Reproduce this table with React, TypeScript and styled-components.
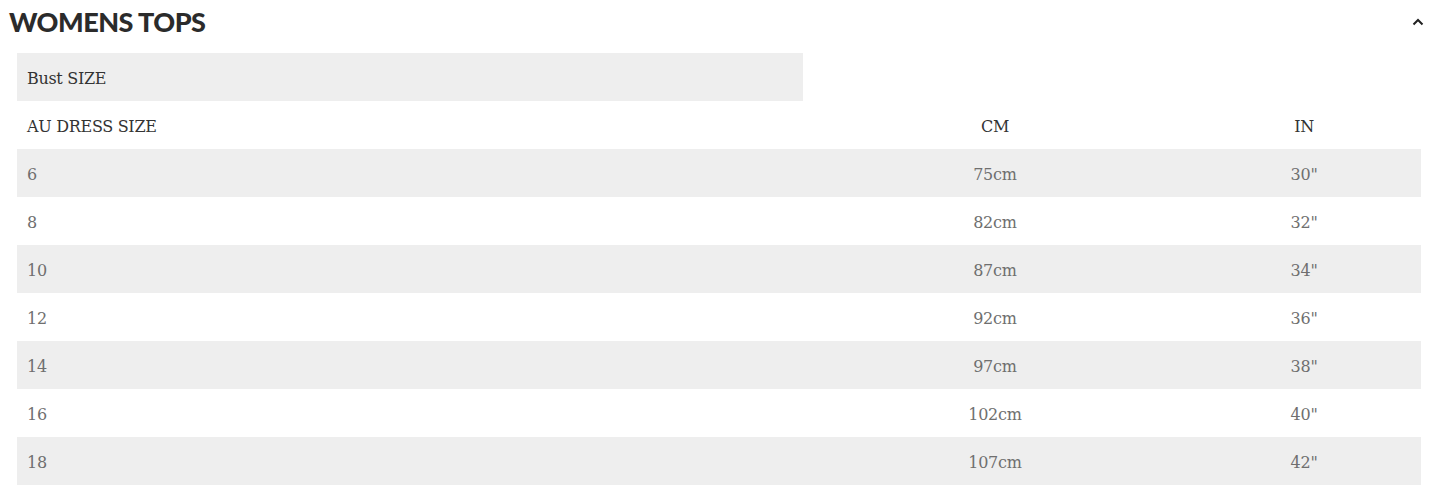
import styled, { createGlobalStyle } from "styled-components";

const GlobalStyle = createGlobalStyle`
  body {
    margin: 0;
    background: #ffffff;
  }
`;

const Page = styled.div`
  display: flex;
  flex-direction: column;
  padding: 0 0 0 9px;
  width: 1436px;
`;

const Header = styled.div`
  display: flex;
  justify-content: space-between;
  align-items: center;
  height: 44px;
  padding-right: 20px;
`;

const Title = styled.h2`
  margin: 0;
  font-family: Lato, "Noto Sans", sans-serif;
  font-weight: 900;
  font-size: 27px;
  letter-spacing: -0.5px;
  color: #2b2b2b;
  line-height: 44px;
`;

const Toggle = styled.span`
  display: flex;
  align-items: center;
  width: 14px;
  height: 14px;
`;

const Table = styled.div`
  display: grid;
  grid-template-columns: 786px 384px 234px;
  margin: 9px 0 0 8px;
  width: 1404px;
  font-family: "DejaVu Serif", "Liberation Serif", serif;
`;

const Cell = styled.div<{ $shade?: boolean; $center?: boolean; $head?: boolean }>`
  height: 48px;
  display: flex;
  align-items: center;
  justify-content: ${(p) => (p.$center ? "center" : "flex-start")};
  padding: 2px 10px 0;
  box-sizing: border-box;
  background: ${(p) => (p.$shade ? "#eeeeee" : "transparent")};
  font-size: 16px;
  font-weight: 400;
  color: ${(p) => (p.$head ? "#333333" : "#6f6f6f")};
  letter-spacing: ${(p) => (p.$head ? "-0.3px" : "-0.2px")};
`;

const rows = [
  ["6", "75cm", "30\""],
  ["8", "82cm", "32\""],
  ["10", "87cm", "34\""],
  ["12", "92cm", "36\""],
  ["14", "97cm", "38\""],
  ["16", "102cm", "40\""],
  ["18", "107cm", "42\""],
];

export default function App() {
  return (
    <>
      <GlobalStyle />
      <Page>
        <Header>
          <Title>WOMENS TOPS</Title>
          <Toggle>
            <svg width="14" height="14" viewBox="0 0 14 14">
              <path d="M2.5 9.5 L7 5 L11.5 9.5" fill="none" stroke="#222" strokeWidth="2" />
            </svg>
          </Toggle>
        </Header>
        <Table>
          <Cell $shade $head>Bust SIZE</Cell>
          <Cell />
          <Cell />
          <Cell $head>AU DRESS SIZE</Cell>
          <Cell $head $center>CM</Cell>
          <Cell $head $center>IN</Cell>
          {rows.map((r, i) => (
            <>
              <Cell key={`a${i}`} $shade={i % 2 === 0}>{r[0]}</Cell>
              <Cell key={`b${i}`} $shade={i % 2 === 0} $center>{r[1]}</Cell>
              <Cell key={`c${i}`} $shade={i % 2 === 0} $center>{r[2]}</Cell>
            </>
          ))}
        </Table>
      </Page>
    </>
  );
}
